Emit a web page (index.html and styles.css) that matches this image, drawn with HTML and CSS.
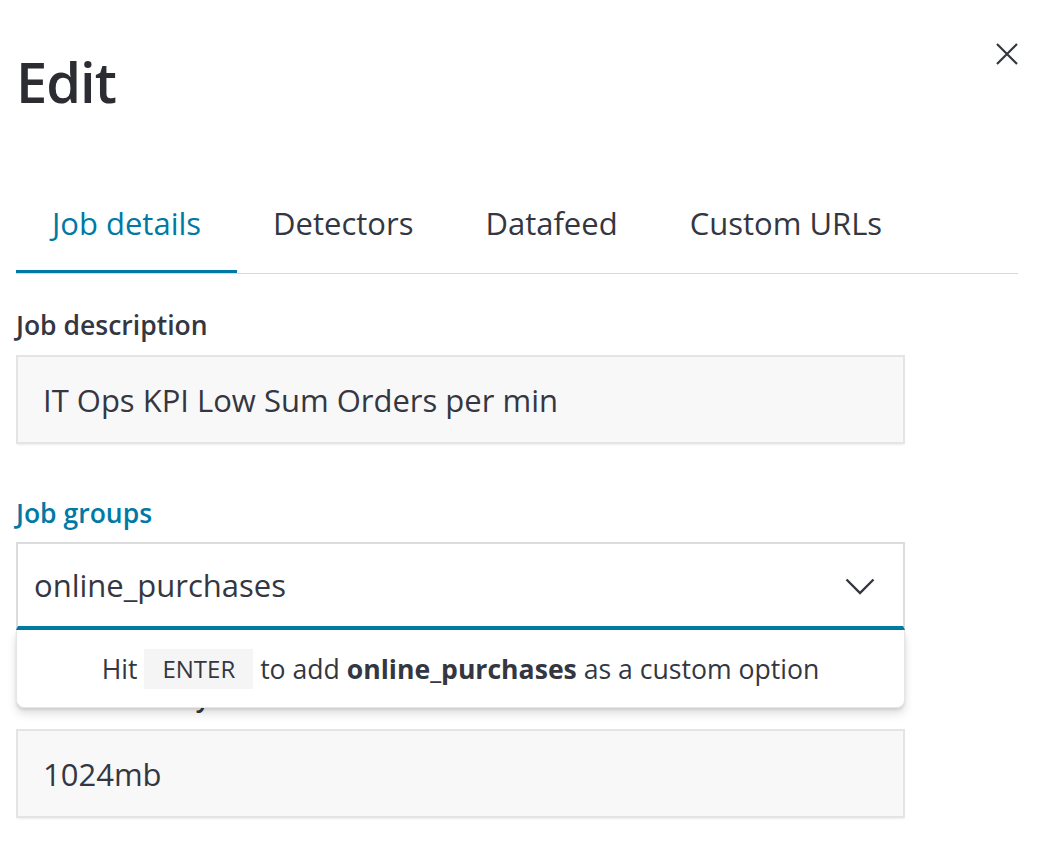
FILE: index.html
```html
<!DOCTYPE html>
<html lang="en">
<head>
<meta charset="utf-8">
<title>Edit</title>
<link rel="stylesheet" href="styles.css">
</head>
<body>
<div class="flyout">
  <button class="close" aria-label="Close">
    <svg width="22" height="22" viewBox="0 0 22 22"><path d="M1 1 L21 21 M21 1 L1 21" stroke="#343741" stroke-width="2.2" fill="none"/></svg>
  </button>
  <h1 class="title">Edit</h1>
  <div class="tabs">
    <div class="tab active">Job details</div>
    <div class="tab">Detectors</div>
    <div class="tab">Datafeed</div>
    <div class="tab">Custom URLs</div>
  </div>
  <div class="form">
    <div class="row">
      <label class="label">Job description</label>
      <div class="field">IT Ops KPI Low Sum Orders per min</div>
    </div>
    <div class="row">
      <label class="label focus">Job groups</label>
      <div class="combo-wrap">
        <div class="combo">
          <span class="combo-text">online_purchases</span>
          <svg class="chev" width="30" height="17" viewBox="0 0 30 17"><path d="M1.5 1.5 L15 15 L28.5 1.5" stroke="#343741" stroke-width="2.4" fill="none"/></svg>
        </div>
        <div class="popover">
          <span class="hint">Hit <span class="kbd">ENTER</span> to add <strong>online_purchases</strong> as a custom option</span>
        </div>
      </div>
    </div>
    <div class="row row-tight">
      <label class="label label-low">Model memory limit</label>
      <div class="field">1024mb</div>
    </div>
  </div>
</div>
</body>
</html>
```

FILE: styles.css
```css
* { box-sizing: border-box; }
html, body { margin: 0; padding: 0; background: #fff; }
body {
  font-family: "Open Sans", "Liberation Sans", sans-serif;
  color: #343741;
  width: 1045px;
  height: 844px;
  overflow: hidden;
}
.flyout {
  position: relative;
  padding: 47px 27px 0 16px;
}
.close {
  position: absolute;
  top: 43px;
  left: 996px;
  width: 22px;
  height: 22px;
  padding: 0;
  border: 0;
  background: none;
  display: block;
}
.close svg { display: block; }
.title {
  margin: 0;
  font-size: 56px;
  line-height: 68px;
  font-weight: 600;
  letter-spacing: -1px;
  color: #2b2d33;
}
.tabs {
  margin-top: 75px;
  display: flex;
  border-bottom: 1px solid #d9d9d9;
}
.tab {
  padding: 13px 36px 27px;
  font-size: 31px;
  line-height: 40px;
  border-bottom: 3px solid transparent;
  color: #343741;
}
.tab.active {
  color: #0079a5;
  border-bottom-color: #0079a5;
}
.form {
  width: 889px;
  padding-top: 35px;
}
.row { display: flex; flex-direction: column; }
.row + .row { margin-top: 53px; }
.row.row-tight { margin-top: 50px; }
.label {
  font-size: 26.5px;
  line-height: 32px;
  font-weight: 600;
  color: #343741;
  margin-bottom: 14px;
}
.label.focus { color: #0079a5; margin-bottom: 13px; }
.label.label-low { margin-bottom: 17px; }
.field {
  height: 89px;
  background: #f8f8f8;
  border: 2px solid #e4e4e4;
  box-shadow: 0 2px 2px -1px rgba(0,0,0,0.08);
  padding: 0 25px;
  display: flex;
  align-items: center;
  font-size: 31px;
  line-height: 40px;
}
.combo-wrap { position: relative; }
.combo {
  height: 88px;
  background: #fff;
  border: 2px solid #dcdcdc;
  border-bottom: 4px solid #0079a5;
  padding: 0 28px 0 16px;
  display: flex;
  align-items: center;
  justify-content: space-between;
  font-size: 31px;
  line-height: 40px;
}
.chev { display: block; margin-top: 2px; }
.popover {
  position: absolute;
  left: 0;
  right: 0;
  top: 100%;
  height: 78px;
  background: #fff;
  border: 1px solid #e6e6e6;
  border-top: 0;
  border-radius: 0 0 8px 8px;
  box-shadow: 0 6px 10px rgba(0,0,0,0.12), 0 2px 3px rgba(0,0,0,0.1);
  display: flex;
  align-items: center;
  justify-content: center;
  z-index: 2;
}
.hint {
  font-size: 26.6px;
  line-height: 40px;
  color: #343741;
  white-space: nowrap;
}
.hint strong { font-weight: 700; }
.kbd {
  display: inline-block;
  background: #f5f5f5;
  padding: 0 18px;
  font-size: 24px;
  line-height: 40px;
  vertical-align: top;
}
```
